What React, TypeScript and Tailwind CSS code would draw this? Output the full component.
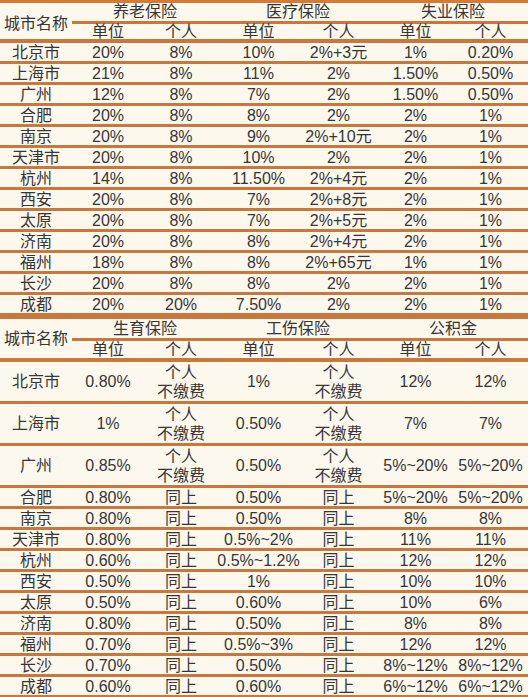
import React from "react";

const LINE = "border-[#c9773b]";

const t1: string[][] = [
  ["北京市", "20%", "8%", "10%", "2%+3元", "1%", "0.20%"],
  ["上海市", "21%", "8%", "11%", "2%", "1.50%", "0.50%"],
  ["广州", "12%", "8%", "7%", "2%", "1.50%", "0.50%"],
  ["合肥", "20%", "8%", "8%", "2%", "2%", "1%"],
  ["南京", "20%", "8%", "9%", "2%+10元", "2%", "1%"],
  ["天津市", "20%", "8%", "10%", "2%", "2%", "1%"],
  ["杭州", "14%", "8%", "11.50%", "2%+4元", "2%", "1%"],
  ["西安", "20%", "8%", "7%", "2%+8元", "2%", "1%"],
  ["太原", "20%", "8%", "7%", "2%+5元", "2%", "1%"],
  ["济南", "20%", "8%", "8%", "2%+4元", "2%", "1%"],
  ["福州", "18%", "8%", "8%", "2%+65元", "1%", "1%"],
  ["长沙", "20%", "8%", "8%", "2%", "2%", "1%"],
  ["成都", "20%", "20%", "7.50%", "2%", "2%", "1%"],
];

const NP = "个人\n不缴费";
const t2: string[][] = [
  ["北京市", "0.80%", NP, "1%", NP, "12%", "12%"],
  ["上海市", "1%", NP, "0.50%", NP, "7%", "7%"],
  ["广州", "0.85%", NP, "0.50%", NP, "5%~20%", "5%~20%"],
  ["合肥", "0.80%", "同上", "0.50%", "同上", "5%~20%", "5%~20%"],
  ["南京", "0.80%", "同上", "0.50%", "同上", "8%", "8%"],
  ["天津市", "0.80%", "同上", "0.5%~2%", "同上", "11%", "11%"],
  ["杭州", "0.60%", "同上", "0.5%~1.2%", "同上", "12%", "12%"],
  ["西安", "0.50%", "同上", "1%", "同上", "10%", "10%"],
  ["太原", "0.50%", "同上", "0.60%", "同上", "10%", "6%"],
  ["济南", "0.80%", "同上", "0.50%", "同上", "8%", "8%"],
  ["福州", "0.70%", "同上", "0.5%~3%", "同上", "12%", "12%"],
  ["长沙", "0.70%", "同上", "0.50%", "同上", "8%~12%", "8%~12%"],
  ["成都", "0.60%", "同上", "0.60%", "同上", "6%~12%", "6%~12%"],
];

function Cell({ text }: { text: string }) {
  const parts = text.split("\n");
  return (
    <div className="flex flex-col items-center justify-center whitespace-nowrap leading-[19px]">
      {parts.map((p, i) => (
        <span key={i}>{p}</span>
      ))}
    </div>
  );
}

function Row({ cells, tall }: { cells: string[]; tall?: boolean }) {
  return (
    <div
      className={`grid grid-cols-[72px_72px_74px_81px_79px_75px_75px] border-b-[3px] ${LINE} ${
        tall ? "h-[42px]" : "h-[21px]"
      }`}
    >
      {cells.map((c, i) => (
        <Cell key={i} text={c} />
      ))}
    </div>
  );
}

function Header({
  groups,
  groupH,
  subH,
  cityPad,
}: {
  groups: string[];
  groupH: string;
  subH: string;
  cityPad: string;
}) {
  return (
    <div className={`flex border-b-[4px] ${LINE}`}>
      <div className={`w-[72px] flex items-center justify-center ${cityPad}`}>城市名称</div>
      <div className="w-[456px] flex flex-col">
        <div className={`grid grid-cols-[146px_160px_150px] ${groupH}`}>
          {groups.map((g) => (
            <div key={g} className="flex items-center justify-center leading-none">
              {g}
            </div>
          ))}
        </div>
        <div className="h-[3px] bg-[#c9773b]" />
        <div className={`grid grid-cols-[72px_74px_81px_79px_75px_75px] ${subH}`}>
          {["单位", "个人", "单位", "个人", "单位", "个人"].map((s, i) => (
            <div key={i} className="flex items-center justify-center leading-none">
              {s}
            </div>
          ))}
        </div>
      </div>
    </div>
  );
}

export default function App() {
  return (
    <div className="w-[528px] h-[697px] overflow-hidden bg-[#fcf8ee] text-[#363636] text-[16px] font-['Liberation_Sans','Noto_Sans_CJK_SC',sans-serif]">
      <div className="h-[3px] bg-[#d67a35]" />
      <Header
        groups={["养老保险", "医疗保险", "失业保险"]}
        groupH="h-[18px]"
        subH="h-[15px]"
        cityPad="pt-[6px]"
      />
      {t1.map((r) => (
        <Row key={r[0]} cells={r} />
      ))}
      <div className="h-[3px] bg-[#c9773b]" />
      <Header
        groups={["生育保险", "工伤保险", "公积金"]}
        groupH="h-[19px]"
        subH="h-[17px]"
        cityPad=""
      />
      {t2.map((r) => (
        <Row key={r[0]} cells={r} tall={r[2].includes("\n")} />
      ))}
    </div>
  );
}
